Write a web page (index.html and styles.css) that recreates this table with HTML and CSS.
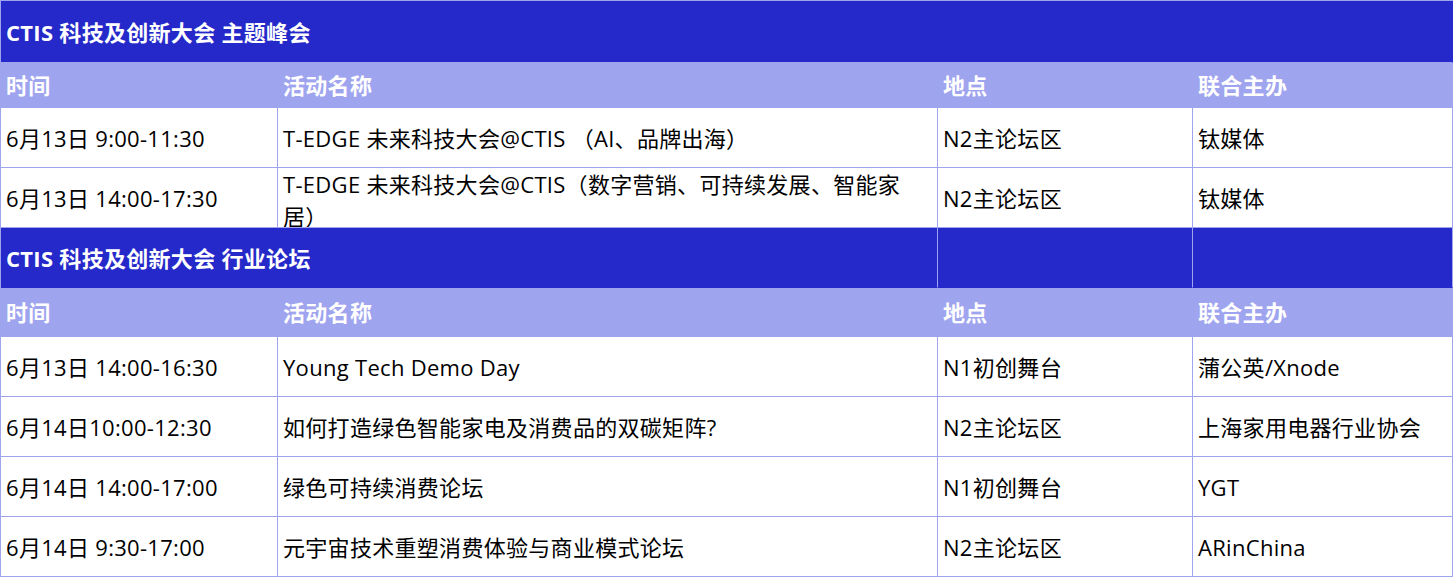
FILE: index.html
```html
<!DOCTYPE html>
<html lang="zh-CN">
<head>
<meta charset="utf-8">
<title>CTIS 科技及创新大会</title>
<link rel="stylesheet" href="styles.css">
</head>
<body>
<div class="schedule">
  <div class="cell title span4">CTIS 科技及创新大会 主题峰会</div>

  <div class="cell head h1">时间</div>
  <div class="cell head h1">活动名称</div>
  <div class="cell head h1">地点</div>
  <div class="cell head h1">联合主办</div>

  <div class="cell">6月13日 9:00-11:30</div>
  <div class="cell">T-EDGE 未来科技大会@CTIS （AI、品牌出海）</div>
  <div class="cell">N2主论坛区</div>
  <div class="cell">钛媒体</div>

  <div class="cell">6月13日 14:00-17:30</div>
  <div class="cell">T-EDGE 未来科技大会@CTIS（数字营销、可持续发展、智能家居）</div>
  <div class="cell">N2主论坛区</div>
  <div class="cell">钛媒体</div>

  <div class="cell title span2 t2">CTIS 科技及创新大会 行业论坛</div>
  <div class="cell title t2"></div>
  <div class="cell title t2"></div>

  <div class="cell head h2">时间</div>
  <div class="cell head h2">活动名称</div>
  <div class="cell head h2">地点</div>
  <div class="cell head h2">联合主办</div>

  <div class="cell">6月13日 14:00-16:30</div>
  <div class="cell">Young Tech Demo Day</div>
  <div class="cell">N1初创舞台</div>
  <div class="cell">蒲公英/Xnode</div>

  <div class="cell">6月14日10:00-12:30</div>
  <div class="cell">如何打造绿色智能家电及消费品的双碳矩阵?</div>
  <div class="cell">N2主论坛区</div>
  <div class="cell">上海家用电器行业协会</div>

  <div class="cell">6月14日 14:00-17:00</div>
  <div class="cell">绿色可持续消费论坛</div>
  <div class="cell">N1初创舞台</div>
  <div class="cell">YGT</div>

  <div class="cell">6月14日 9:30-17:00</div>
  <div class="cell">元宇宙技术重塑消费体验与商业模式论坛</div>
  <div class="cell">N2主论坛区</div>
  <div class="cell">ARinChina</div>
</div>
</body>
</html>
```

FILE: styles.css
```css
html, body {
  margin: 0;
  padding: 0;
  background: #ffffff;
}

.schedule {
  display: grid;
  grid-template-columns: 277px 660px 255px 260px;
  grid-template-rows: 62px 45px 60px 60px 60px 49px 60px 60px 60px 60px;
  width: max-content;
  border-left: 1px solid #9fa4ef;
  border-top: 1px solid #9fa4ef;
  font-family: "Open Sans", "Noto Sans CJK SC", sans-serif;
  font-size: 22px;
  line-height: 32px;
  letter-spacing: 0.3px;
  color: #000000;
}

.cell {
  box-sizing: border-box;
  display: flex;
  align-items: safe center;
  padding: 0 5px;
  border-right: 1px solid #9fa4ef;
  border-bottom: 1px solid #9fa4ef;
  overflow: hidden;
  white-space: normal;
}

.title {
  background: #2529c9;
  color: #ffffff;
  font-weight: 700;
}

.head {
  background: #9fa4ef;
  color: #ffffff;
  font-weight: 700;
}

.span4 {
  grid-column: span 4;
  border-right-color: #2529c9;
}

.span2 {
  grid-column: span 2;
}

.t2 {
  border-bottom-color: #2529c9;
}
```
